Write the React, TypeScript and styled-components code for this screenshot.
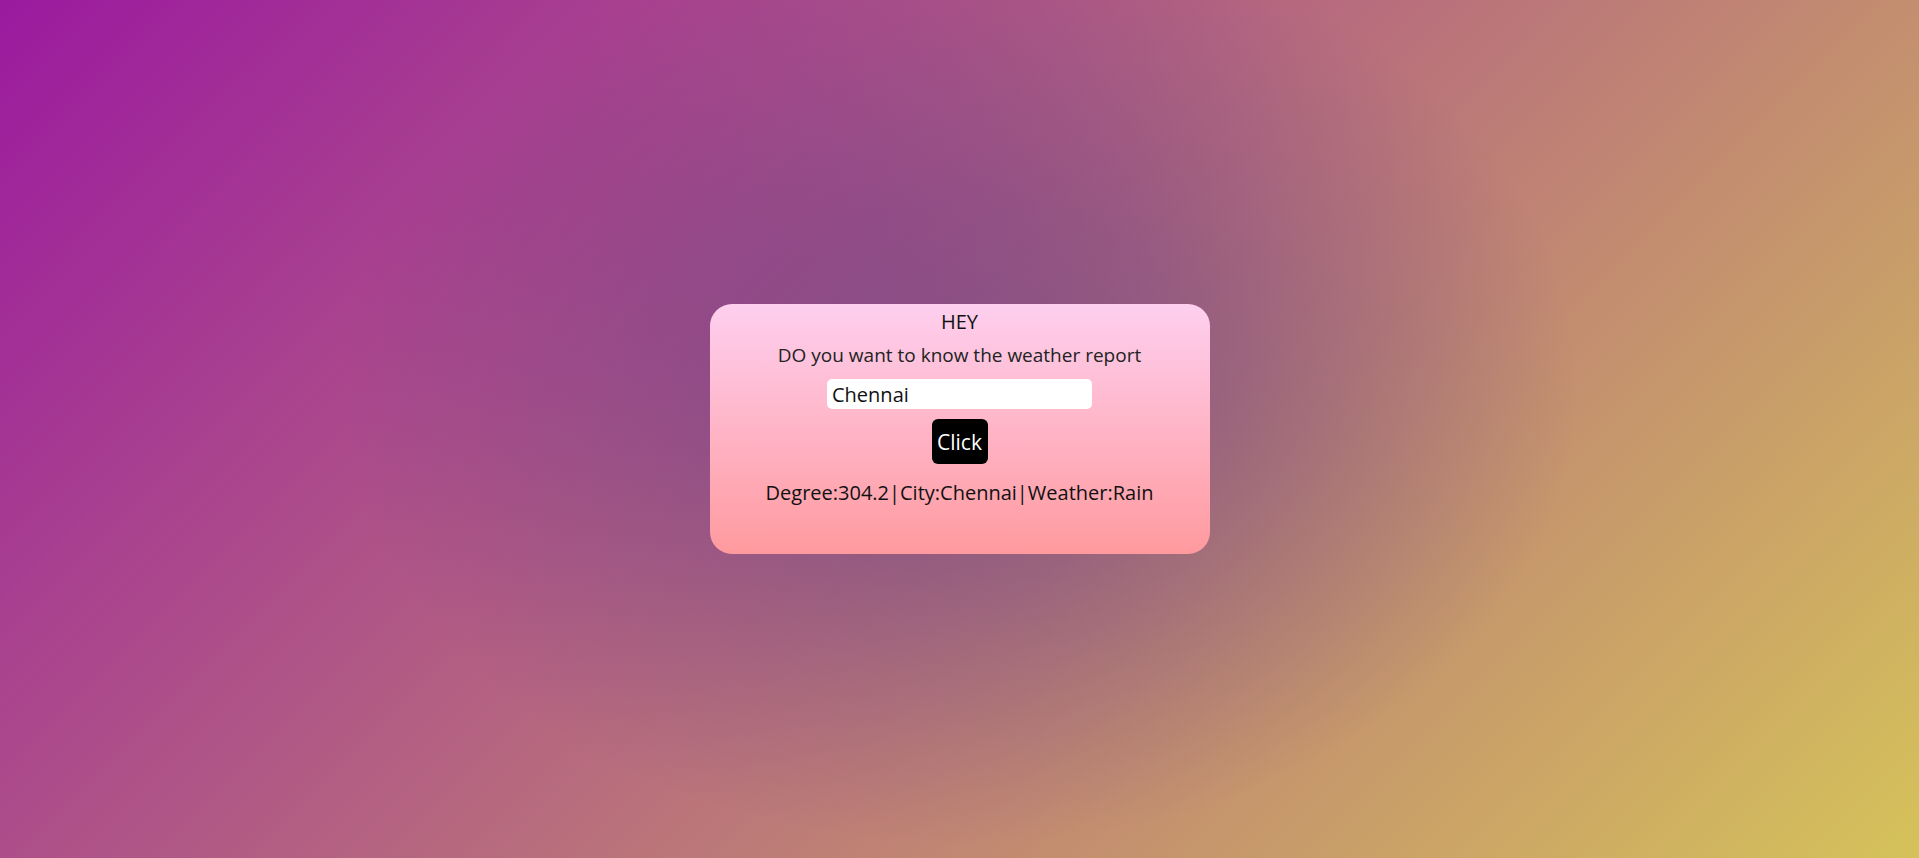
import React from "react";
import styled, { createGlobalStyle } from "styled-components";

const Global = createGlobalStyle`
  html, body { margin: 0; padding: 0; height: 100%; }
  body {
    font-family: "Open Sans", "Noto Sans", sans-serif;
    overflow: hidden;
  }
  #root { height: 100%; }
`;

const Page = styled.div`
  width: 100vw;
  height: 100vh;
  display: flex;
  align-items: center;
  justify-content: center;
  background:
    radial-gradient(ellipse 620px 460px at 50% 45%, rgba(70, 40, 140, 0.42) 0%, rgba(70, 40, 140, 0.3) 40%, rgba(70, 40, 140, 0) 100%),
    linear-gradient(135deg, #9b1a9f 0%, #d5c25a 100%);
`;

const Card = styled.div`
  width: 500px;
  height: 250px;
  box-sizing: border-box;
  border-radius: 22px;
  background: linear-gradient(to top, #ff9a9e 0%, #fecfef 100%);
  display: flex;
  flex-direction: column;
  align-items: center;
  padding-top: 4px;
  color: #111;
`;

const Title = styled.div`
  font-size: 20px;
  line-height: 28px;
`;

const Subtitle = styled.div`
  font-size: 19px;
  line-height: 26px;
  margin-top: 6px;
  color: #222;
`;

const Input = styled.input`
  margin-top: 11px;
  width: 265px;
  height: 30px;
  box-sizing: border-box;
  border: none;
  border-radius: 5px;
  background: #fff;
  font-family: inherit;
  font-size: 20px;
  padding: 0 5px;
  color: #111;
  outline: none;
`;

const Button = styled.button`
  margin-top: 10px;
  width: 56px;
  height: 45px;
  border: none;
  border-radius: 6px;
  background: #000;
  color: #fff;
  font-family: inherit;
  font-size: 21px;
  padding: 0;
`;

const Result = styled.div`
  margin-top: 15px;
  font-size: 20px;
  line-height: 28px;
`;

export default function App() {
  return (
    <>
      <Global />
      <Page>
        <Card>
          <Title>HEY</Title>
          <Subtitle>DO you want to know the weather report</Subtitle>
          <Input defaultValue="Chennai" />
          <Button>Click</Button>
          <Result>Degree:304.2|City:Chennai|Weather:Rain</Result>
        </Card>
      </Page>
    </>
  );
}
